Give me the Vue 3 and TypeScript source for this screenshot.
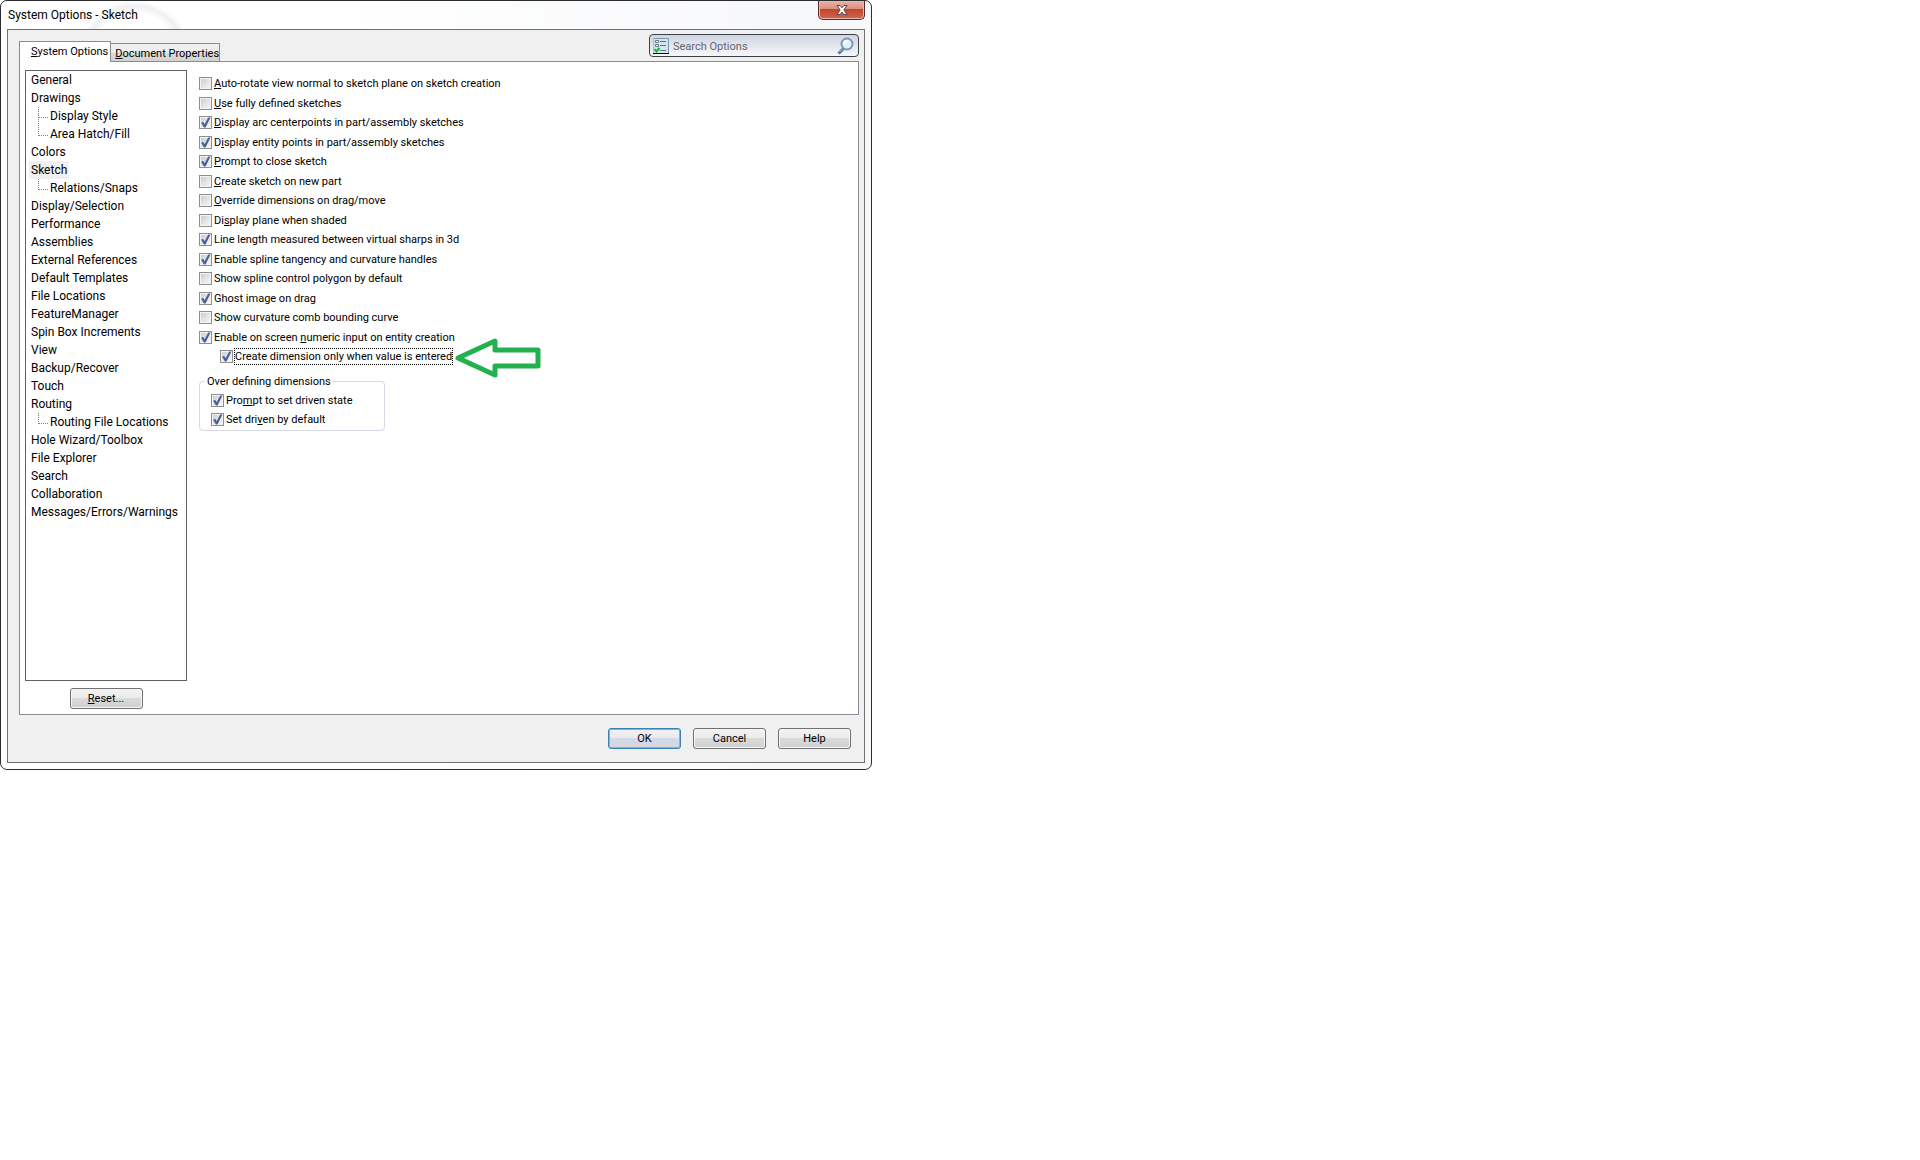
<script setup lang="ts">
import { ref } from 'vue'

interface TreeNode {
  label: string
  children?: string[]
}

interface Option {
  id: string
  pre: string
  key: string
  post: string
  checked: boolean
}

const tree: TreeNode[] = [
  { label: 'General' },
  { label: 'Drawings', children: ['Display Style', 'Area Hatch/Fill'] },
  { label: 'Colors' },
  { label: 'Sketch', children: ['Relations/Snaps'] },
  { label: 'Display/Selection' },
  { label: 'Performance' },
  { label: 'Assemblies' },
  { label: 'External References' },
  { label: 'Default Templates' },
  { label: 'File Locations' },
  { label: 'FeatureManager' },
  { label: 'Spin Box Increments' },
  { label: 'View' },
  { label: 'Backup/Recover' },
  { label: 'Touch' },
  { label: 'Routing', children: ['Routing File Locations'] },
  { label: 'Hole Wizard/Toolbox' },
  { label: 'File Explorer' },
  { label: 'Search' },
  { label: 'Collaboration' },
  { label: 'Messages/Errors/Warnings' },
]

const selected = ref('Sketch')
const query = ref('')

// The part between pre and post is the underlined access key.
function option(id: string, pre: string, key: string, post: string, checked: boolean): Option {
  return { id, pre, key, post, checked }
}

const options = ref<Option[]>([
  option('auto-rotate', '', 'A', 'uto-rotate view normal to sketch plane on sketch creation', false),
  option('fully-defined', '', 'U', 'se fully defined sketches', false),
  option('arc-centerpoints', '', 'D', 'isplay arc centerpoints in part/assembly sketches', true),
  option('entity-points', 'D', 'i', 'splay entity points in part/assembly sketches', true),
  option('prompt-close', '', 'P', 'rompt to close sketch', true),
  option('new-part', '', 'C', 'reate sketch on new part', false),
  option('override', '', 'O', 'verride dimensions on drag/move', false),
  option('plane-shaded', 'Di', 's', 'play plane when shaded', false),
  option('line-length', 'Line length measured between virtual sharps in 3d', '', '', true),
  option('spline-handles', 'Enable spline tangency and curvature handles', '', '', true),
  option('control-polygon', 'Show spline control polygon by default', '', '', false),
  option('ghost', 'Ghost image on drag', '', '', true),
  option('comb', 'Show curvature comb bounding curve', '', '', false),
  option('numeric-input', 'Enable on screen ', 'n', 'umeric input on entity creation', true),
])

const valueEntered = ref(true)

const driven = ref<Option[]>([
  option('driven-state', 'Pro', 'm', 'pt to set driven state', true),
  option('driven-default', 'Set dri', 'v', 'en by default', true),
])
</script>

<template>
  <main class="window">
    <header class="titlebar">
      <h1>System Options - Sketch</h1>
      <button class="close" type="button" aria-label="Close">
        <svg width="12" height="10" viewBox="0 0 12 10">
          <path d="M1 .5h3l2 2.300 2-2.300h3L7.900 5 11 9.500H8L6 7.200 4 9.500H1L4.100 5z" fill="#fff" stroke="#54424a" />
        </svg>
      </button>
    </header>

    <div class="client">
      <div class="top">
        <div class="tabs" role="tablist">
          <button class="tab active" type="button" role="tab" aria-selected="true"><u>S</u>ystem Options</button>
          <button class="tab" type="button" role="tab" aria-selected="false"><u>D</u>ocument Properties</button>
        </div>
        <label class="search">
          <svg width="16" height="16" viewBox="0 0 16 16" aria-hidden="true">
            <rect width="16" height="16" fill="#d3e6ee" />
            <path d="M0 .5h15.500V15" fill="none" stroke="#7d93ad" />
            <path d="M.5 0v15" stroke="#a9c0d0" />
            <path d="M0 15.500h16" stroke="#000" />
            <path d="M2.500 2.500h3v2h-3zM2.500 6.500h3v2h-3z" fill="#fff" stroke="#66788c" />
            <path d="M7 3.500h6M7 7.500h6M7 12.500h6" stroke="#5c6f84" />
            <path d="M1.500 11l2 2.500L6.500 10" fill="none" stroke="#18b43c" stroke-width="2" />
          </svg>
          <input v-model="query" type="text" placeholder="Search Options" aria-label="Search Options" />
          <svg width="17" height="18" viewBox="0 0 17 18" aria-hidden="true">
            <path d="M6.500 11.500L1.500 16.500" stroke="#4b6d96" stroke-width="3" />
            <path d="M6 11.500L2 15.500" stroke="#b4cfe8" />
            <circle cx="10" cy="7" r="5.500" fill="#e3f1fa" stroke="#7f96b2" stroke-width="2" />
            <path d="M7 7a3 3 0 0 1 3-3" fill="none" stroke="#fff" stroke-width="2" />
          </svg>
        </label>
      </div>

      <div class="panel">
        <aside class="side">
          <ul class="tree">
            <li v-for="node in tree" :key="node.label">
              <a href="#" :class="{ selected: node.label === selected }" @click.prevent="selected = node.label">{{ node.label }}</a>
              <ul v-if="node.children" class="branch">
                <li v-for="child in node.children" :key="child">
                  <a href="#" :class="{ selected: child === selected }" @click.prevent="selected = child">{{ child }}</a>
                </li>
              </ul>
            </li>
          </ul>
          <button class="btn" type="button"><span><u>R</u>eset...</span></button>
        </aside>

        <form class="options" @submit.prevent>
          <div v-for="o in options" :key="o.id" class="row">
            <input :id="o.id" v-model="o.checked" type="checkbox" />
            <label :for="o.id">{{ o.pre }}<u v-if="o.key">{{ o.key }}</u>{{ o.post }}</label>
          </div>
          <div class="row nested">
            <input id="value-entered" v-model="valueEntered" type="checkbox" />
            <label for="value-entered" class="focused">Create dimension only when value is entered</label>
            <svg class="arrow" width="88" height="42" viewBox="0 0 88 42" aria-hidden="true">
              <path d="M5 21L42 4v9h43v16H42v9z" fill="#fff" stroke="#22b14c" stroke-width="5" stroke-linejoin="round" />
            </svg>
          </div>
          <fieldset>
            <legend>Over defining dimensions</legend>
            <div v-for="o in driven" :key="o.id" class="row">
              <input :id="o.id" v-model="o.checked" type="checkbox" />
              <label :for="o.id">{{ o.pre }}<u>{{ o.key }}</u>{{ o.post }}</label>
            </div>
          </fieldset>
        </form>
      </div>

      <footer class="actions">
        <button class="btn primary" type="button">OK</button>
        <button class="btn" type="button">Cancel</button>
        <button class="btn" type="button">Help</button>
      </footer>
    </div>
  </main>
</template>

<style>
body {
  margin: 0;
  background: #fff;
}
</style>

<style scoped>
* {
  box-sizing: border-box;
}

.window {
  display: flex;
  flex-direction: column;
  max-width: 872px;
  padding: 0 6px 6px;
  border: 1px solid #2b2c30;
  border-radius: 7px;
  background: linear-gradient(90deg, #fff 40%, #f7f8fa 90%);
  color: #000;
  font: 11px/15px Roboto, sans-serif;
}

button,
input {
  font: inherit;
  color: inherit;
}

.titlebar {
  display: flex;
  justify-content: space-between;
  align-items: flex-start;
  height: 28px;
  background: radial-gradient(ellipse 52px 44px at 128px 44px, transparent 72%, #f0f0f2 88%, transparent 100%);
}

.titlebar h1 {
  margin: 0;
  padding: 5px 1px;
  font: 12px/18px Roboto, sans-serif;
}

.close {
  display: flex;
  justify-content: center;
  align-items: center;
  width: 47px;
  height: 19px;
  padding: 0;
  border: 1px solid #5b2a28;
  border-top: 0;
  border-radius: 0 0 5px 5px;
  background: linear-gradient(#e9b3a8, #dd8d7e 45%, #c4452c 46%, #cf6650);
  box-shadow: inset 0 0 0 1px #eab9ae;
}

.client {
  display: flex;
  flex-direction: column;
  padding: 4px 5px 13px 11px;
  border: 1px solid #6f7072;
  background: #f0f0f0;
}

.top {
  display: flex;
  justify-content: space-between;
  align-items: flex-start;
}

.tabs {
  display: flex;
  align-items: flex-end;
  height: 27px;
  padding-top: 7px;
}

.tab {
  height: 18px;
  padding: 1px 0 0 4px;
  border: 1px solid #898c95;
  border-left: 0;
  border-bottom: 0;
  background: linear-gradient(#f2f2f2, #ebebeb 50%, #dadada 51%, #d2d2d2);
  white-space: nowrap;
}

.tab.active {
  position: relative;
  height: 21px;
  margin-bottom: -1px;
  padding: 0 2px 1px 11px;
  border-left: 1px solid #898c95;
  background: #fff;
}

.search {
  display: flex;
  align-items: center;
  gap: 4px;
  width: 210px;
  height: 23px;
  padding: 0 4px 0 3px;
  border: 1px solid #3d4148;
  border-radius: 4px;
  background: linear-gradient(#cfd5e2, #e3e6ee 50%, #f6f7f9);
}

.search input {
  flex: 1;
  min-width: 0;
  padding: 1px 0 0;
  border: 0;
  outline: 0;
  background: none;
}

.search input::placeholder {
  color: #63656e;
  opacity: 1;
}

.panel {
  display: flex;
  gap: 12px;
  padding: 8px 5px 5px;
  border: 1px solid #898c95;
  background: #fff;
}

.side {
  display: flex;
  flex: none;
  flex-direction: column;
  align-items: center;
  gap: 7px;
  width: 162px;
}

.tree {
  align-self: stretch;
  min-height: 611px;
  padding: 0 3px;
  border: 1px solid #5f6065;
  font: 12px/18px Roboto, sans-serif;
}

.tree,
.branch {
  margin: 0;
  list-style: none;
}

.tree a {
  display: block;
  width: fit-content;
  padding: 0 2px;
  color: #000;
  text-decoration: none;
  white-space: nowrap;
}

.tree a.selected {
  background: #f0f0f0;
}

.branch {
  padding-left: 9px;
}

.branch li {
  display: flex;
}

.branch li::before {
  content: "";
  width: 9px;
  height: 10px;
  border-left: 1px dotted #808080;
  border-bottom: 1px dotted #808080;
}

.branch li:not(:first-child)::before {
  height: 18px;
  margin-top: -8px;
}

.options {
  display: flex;
  flex: 1;
  flex-direction: column;
  align-items: flex-start;
  padding-top: 4px;
}

.row {
  display: flex;
  align-items: center;
  gap: 2px;
  height: 19px;
  white-space: nowrap;
}

.options > .row:nth-child(odd) {
  margin-bottom: 1px;
}

.row.nested {
  position: relative;
  margin-left: 21px;
}

.row .focused {
  outline: 1px dotted #000;
}

.arrow {
  position: absolute;
  top: -10px;
  left: 233px;
}

input[type="checkbox"] {
  appearance: none;
  flex: none;
  width: 13px;
  height: 13px;
  margin: 0;
  border: 1px solid #8e8f8f;
  background: linear-gradient(135deg, #cbcfd5, #f6f6f6) center / 9px 9px no-repeat #f4f4f4;
}

input[type="checkbox"]:checked::before {
  content: "";
  display: block;
  width: 11px;
  height: 11px;
  background: #4b5f97;
  clip-path: polygon(10% 50%, 30% 45%, 42% 65%, 75% 5%, 95% 5%, 50% 95%, 35% 95%);
}

fieldset {
  width: 186px;
  min-width: 0;
  margin: 7px 0 0;
  padding: 2px 11px 1px;
  border: 1px solid #d5dae6;
  border-radius: 4px;
}

legend {
  margin-left: -6px;
  padding: 0 2px;
}

.btn {
  width: 73px;
  height: 21px;
  padding: 0;
  border: 1px solid #707070;
  border-radius: 3px;
  background: linear-gradient(#f3f3f3, #ebebeb 48%, #d9dada 50%, #cfd0d0);
  box-shadow: inset 0 0 0 1px #f6f6f6;
}

.btn.primary {
  border-color: #3c7fb1;
  background: linear-gradient(#f0f1f4, #e8eaf0 48%, #d6dae6 50%, #d3d7e2);
  box-shadow: inset 0 0 0 1px #3fd0f7;
}

.actions {
  display: flex;
  justify-content: flex-end;
  gap: 12px;
  padding: 13px 8px 0 0;
}
</style>
